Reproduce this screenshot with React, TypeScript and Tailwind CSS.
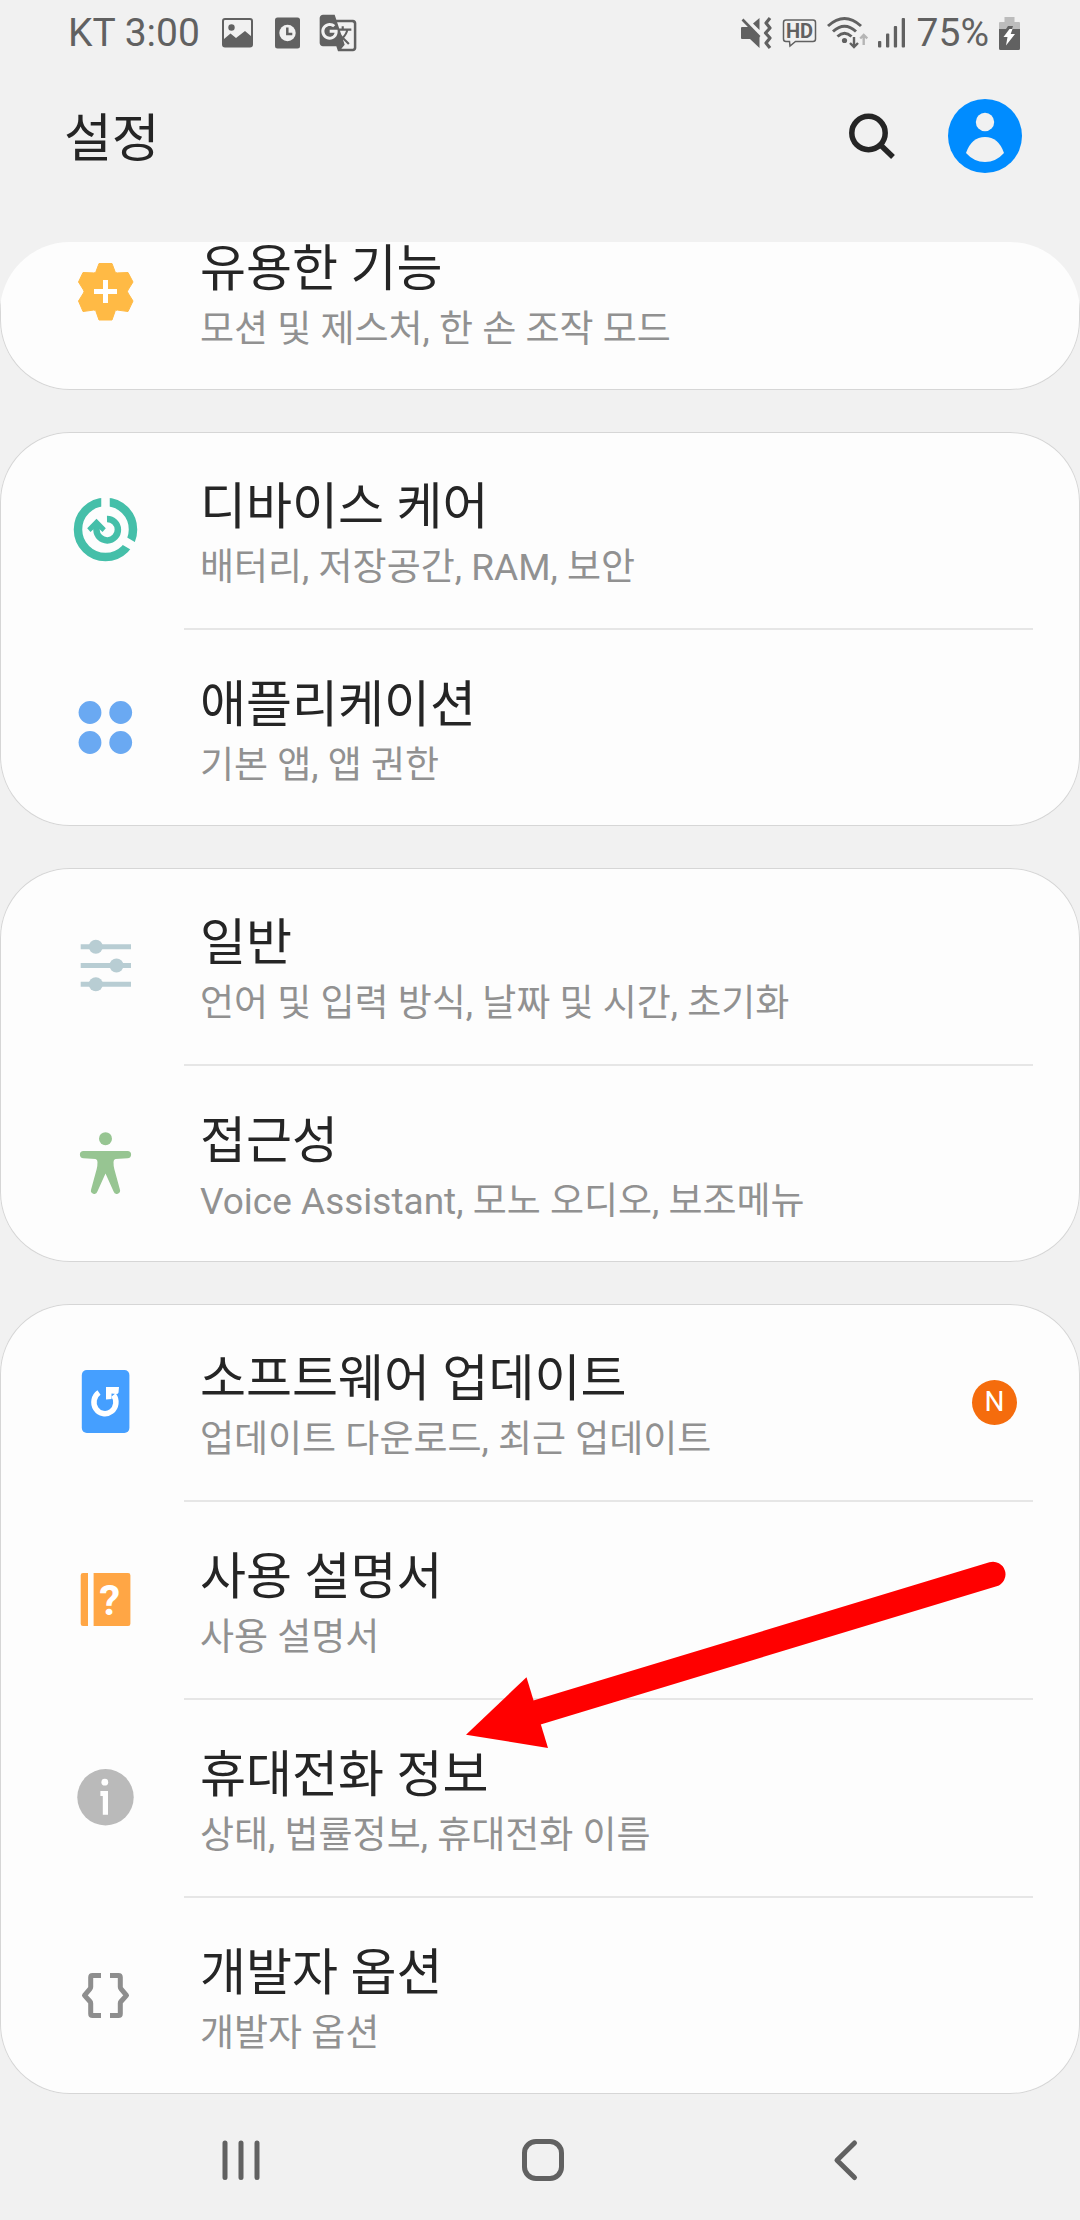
// src/App.tsx
import type { ReactNode } from "react";
import { MdGTranslate } from "react-icons/md";

type Item = {
  title: string;
  summary: string;
  icon: ReactNode;
  badge?: string;
};

/* ---------- Row icons ---------- */

function IconBox({ children }: { children: ReactNode }) {
  return (
    <svg viewBox="0 0 80 80" fill="none" aria-hidden="true" className="size-20 shrink-0">
      {children}
    </svg>
  );
}

const gearIcon = (
  <IconBox>
    <path
      d="M33 11.500h13l3 8q.8 1.800 2.600 1.400L62 20.500l5 9.500-5 8q-1 1.500 0 3l5 8-5 10.500-10.400-1.400q-1.800-.3-2.600 1.400L46 68H33l-3-8.500q-.8-1.800-2.600-1.400L17 59.500 12.500 49l5-8q1-1.500 0-3l-5-8L17 20.500l10.400.4q1.800.4 2.600-1.400z"
      fill="#ffba45"
      stroke="#ffba45"
      strokeLinejoin="round"
    />
    <path d="M28 39.500h23M39.500 28v23" stroke="#fff" strokeWidth="5" />
  </IconBox>
);

const careIcon = (
  <IconBox>
    <circle cx="39.500" cy="39.500" r="27.500" stroke="#45bfa9" strokeWidth="8.500" />
    <path d="M39.500 20V4M56 49.500l17 10" stroke="#fdfdfd" strokeWidth="8.500" />
    <path d="M41 29a10.700 10.700 0 1 1-10.500 11V36" stroke="#45bfa9" strokeWidth="6.500" />
    <path d="M30.500 28.800l9.300 9.500-3.300 3.700-6-5.500-6 5.500-3.300-3.700z" fill="#45bfa9" />
  </IconBox>
);

const appsIcon = (
  <IconBox>
    <g fill="#6aa9f2">
      <circle cx="24" cy="24.500" r="11.400" />
      <circle cx="54.700" cy="24.500" r="11.400" />
      <circle cx="24" cy="54.500" r="11.400" />
      <circle cx="54.700" cy="54.500" r="11.400" />
    </g>
  </IconBox>
);

const generalIcon = (
  <IconBox>
    <path d="M14.700 20.700H65M14.700 39.500H65M14.700 58.300H65" stroke="#b8cdd3" strokeWidth="5" />
    <g fill="#b8cdd3">
      <circle cx="29.800" cy="20.700" r="7" />
      <circle cx="50.500" cy="39.500" r="7" />
      <circle cx="29.800" cy="58.300" r="7" />
    </g>
  </IconBox>
);

const accessibilityIcon = (
  <IconBox>
    <g fill="#97c592">
      <circle cx="39.500" cy="14.700" r="6.500" />
      <path d="M17.500 27h44a3.600 3.600 0 0 1 0 7.200l-12 .8q-2 .3-2 3 0 4 .8 7l5.600 20.500a3.300 3.300 0 0 1-6.300 2L39.500 49.500l-8.100 18a3.300 3.300 0 0 1-6.300-2L30.700 45q.8-3 .8-7 0-2.700-2-3l-12-.8a3.600 3.600 0 0 1 0-7.200z" />
    </g>
  </IconBox>
);

const updateIcon = (
  <IconBox>
    <rect x="15.800" y="8" width="47.600" height="63" rx="5" fill="#459fff" />
    <path d="M33 30.500a11 11.500 0 1 0 14.500 2.500" stroke="#fff" strokeWidth="5.500" />
    <path d="M40 25h13l-.5 5.500q-.2 1.500-2.500 1.500l-4.500-.5V37l-5.500.500z" fill="#fff" />
  </IconBox>
);

const manualIcon = (
  <IconBox>
    <path d="M17 13h5v53h-5a2.300 2.300 0 0 1-2.300-2.300V15.300A2.300 2.300 0 0 1 17 13zM27.600 13h34.500a2.300 2.300 0 0 1 2.300 2.300v48.400a2.300 2.300 0 0 1-2.300 2.300H27.600z" fill="#ffa645" />
    <text x="43.700" y="55" textAnchor="middle" fill="#fff" className="font-['Roboto',sans-serif] text-[42px] font-bold">
      ?
    </text>
  </IconBox>
);

const infoIcon = (
  <IconBox>
    <circle cx="39.500" cy="39.300" r="28.200" fill="#bababa" />
    <circle cx="38.800" cy="24.200" r="3.400" fill="#fff" />
    <path d="M34.400 33H42v23.800h-5.200V38h-2.400z" fill="#fff" />
  </IconBox>
);

const developerIcon = (
  <IconBox>
    <path
      d="M35 19.500h-8.500q-1.800 0-1.800 1.800V31q0 1-.7 1.800l-5.500 6.500 5.500 6.200q.7.800.7 1.800v10.400q0 1.800 1.800 1.800H35M44 19.500h8.500q1.800 0 1.800 1.800V31q0 1 .7 1.800l5.500 6.500-5.500 6.200q-.7.800-.7 1.800v10.400q0 1.800-1.800 1.800H44"
      stroke="#8e8e8e"
      strokeWidth="5"
      strokeLinejoin="round"
    />
  </IconBox>
);

/* ---------- Data ---------- */

const advanced: Item[] = [
  { title: "유용한 기능", summary: "모션 및 제스처, 한 손 조작 모드", icon: gearIcon },
];

const device: Item[] = [
  { title: "디바이스 케어", summary: "배터리, 저장공간, RAM, 보안", icon: careIcon },
  { title: "애플리케이션", summary: "기본 앱, 앱 권한", icon: appsIcon },
];

const general: Item[] = [
  { title: "일반", summary: "언어 및 입력 방식, 날짜 및 시간, 초기화", icon: generalIcon },
  { title: "접근성", summary: "Voice Assistant, 모노 오디오, 보조메뉴", icon: accessibilityIcon },
];

const about: Item[] = [
  { title: "소프트웨어 업데이트", summary: "업데이트 다운로드, 최근 업데이트", icon: updateIcon, badge: "N" },
  { title: "사용 설명서", summary: "사용 설명서", icon: manualIcon },
  { title: "휴대전화 정보", summary: "상태, 법률정보, 휴대전화 이름", icon: infoIcon },
  { title: "개발자 옵션", summary: "개발자 옵션", icon: developerIcon },
];

/* ---------- Parts ---------- */

function StatusBar() {
  return (
    <div className="flex h-[66px] items-center justify-between pl-[68px] pr-[60px] text-[39px] leading-none text-[#616161]">
      <div className="flex items-center gap-[22px]">
        <span>KT 3:00</span>
        <svg width="31" height="30" viewBox="0 0 31 30" aria-hidden="true">
          <rect x="1" y="1" width="29" height="27.500" rx="2" fill="none" stroke="currentColor" strokeWidth="2" />
          <circle cx="9.500" cy="9.500" r="3.200" fill="currentColor" />
          <path d="M2 21l6.500-5.500 5.500 4.500 9-7 6.500 5.500V28H2z" fill="currentColor" />
        </svg>
        <svg width="25" height="32" viewBox="0 0 25 32" aria-hidden="true">
          <rect width="25" height="31" y=".5" rx="2.500" fill="currentColor" />
          <circle cx="12.500" cy="16" r="8.200" fill="#f1f1f1" />
          <path d="M12.300 10.500v6.500h5" fill="none" stroke="currentColor" strokeWidth="2.500" />
        </svg>
        <MdGTranslate className="-mx-1 size-10" />
      </div>
      <div className="flex items-center gap-[10px]">
        <svg width="32" height="32" viewBox="0 0 32 32" aria-hidden="true">
          <path d="M2 10h8l9.500 9.500V31L10 22H2q-1 0-1-1V11q0-1 1-1zM19.500 1v12L13 6.500z" fill="currentColor" />
          <path d="M2.500 2.500l17 17.500" stroke="currentColor" strokeWidth="2.600" />
          <path d="M30 1l-4 5 4 5-4.500 5 4.500 5-4 5 4 5" fill="none" stroke="currentColor" strokeWidth="3.200" strokeLinejoin="round" />
        </svg>
        <svg width="35" height="30" viewBox="0 0 35 30" aria-hidden="true">
          <path
            d="M4 2h27q2.500 0 2.500 2.500V21q0 2.500-2.500 2.500H13.500L8 28l-.5-4.500H4Q1.500 23.500 1.500 21V4.500Q1.500 2 4 2z"
            fill="none"
            stroke="currentColor"
            strokeWidth="1.500"
          />
          <text x="17.500" y="20" textAnchor="middle" fill="currentColor" className="font-['Roboto',sans-serif] text-[20px] font-bold">
            HD
          </text>
        </svg>
        <svg width="41" height="34" viewBox="0 0 41 34" aria-hidden="true">
          <g fill="none" stroke="currentColor" strokeWidth="3">
            <path d="M1 10Q17.500-5 34 10M6 15.500q11.500-10.500 23 0M10.500 20.500q7-6.500 14 0" />
            <path d="M27 21v10M23 27l4 4 4-4" strokeWidth="2.400" />
            <path d="M36.700 29V19M33.200 22.500l3.500-3.500 3.500 3.500" stroke="#b5b5b5" strokeWidth="2.400" />
          </g>
          <circle cx="17.500" cy="24.500" r="2.600" fill="currentColor" />
        </svg>
        <svg width="27" height="30" viewBox="0 0 27 30" aria-hidden="true">
          <g fill="currentColor">
            <rect x="0" y="23" width="3.300" height="6.500" rx="1" />
            <rect x="8" y="15.500" width="3.300" height="14" rx="1" />
            <rect x="15.800" y="8" width="3.300" height="21.500" rx="1" />
            <rect x="23.700" y="0" width="3.300" height="29.500" rx="1" />
          </g>
        </svg>
        <span className="pl-0.5">75%</span>
        <svg width="21" height="33" viewBox="0 0 21 33" aria-hidden="true">
          <path d="M5.500 0h10v5H20q1 0 1 1v7H0V6q0-1 1-1h4.500z" fill="#bcbcbc" />
          <path d="M0 12h7l2-3h5l-1 3h8v19.500q0 1.500-1.500 1.500h-18Q0 33 0 31.500z" fill="currentColor" />
          <path d="M10.500 12l-6 8h4L7 28.500 16 17h-4.300l1.800-5z" fill="#fff" />
        </svg>
      </div>
    </div>
  );
}

function Header() {
  return (
    <header className="flex h-[140px] items-center pl-[64px] pr-[58px]">
      <h1 className="flex-1 pt-2 text-[52px] leading-[68px]">설정</h1>
      <button type="button" aria-label="검색" className="mr-12">
        <svg viewBox="0 0 56 56" fill="none" stroke="#252525" className="size-14">
          <circle cx="24.500" cy="25" r="16.700" strokeWidth="5.500" />
          <path d="M36 36.500l13 12.500" strokeWidth="5.500" />
        </svg>
      </button>
      <button type="button" aria-label="계정">
        <svg viewBox="0 0 74 74" className="size-[74px]">
          <circle cx="37" cy="37" r="37" fill="#008cff" />
          <circle cx="37" cy="23" r="9.200" fill="#f1f1f1" />
          <path d="M18 54Q23.500 38 37 38t19 16Q48 63 37 63t-19-9z" fill="#f1f1f1" />
        </svg>
      </button>
    </header>
  );
}

function Row({ item }: { item: Item }) {
  return (
    <button type="button" className="flex h-[196px] w-full items-center gap-[54px] pl-[66px] pr-[63px] text-left">
      {item.icon}
      <span className="flex-1 pt-2">
        <span className="block text-[50px] leading-[68px] text-[#252525]">{item.title}</span>
        <span className="block text-[37px] leading-[54px] text-[#919191]">{item.summary}</span>
      </span>
      {item.badge && (
        <span className="flex size-[45px] items-center justify-center rounded-full bg-[#f56c0d] text-[28px] leading-none text-white">
          {item.badge}
        </span>
      )}
    </button>
  );
}

function Card({ items, children }: { items: Item[]; children?: ReactNode }) {
  return (
    <section className="relative rounded-[70px] bg-[#fdfdfd] ring-1 ring-inset ring-[#d6d6d6]">
      <ul>
        {items.map((item, i) => (
          <li key={item.title}>
            {i > 0 && <div className="ml-[184px] mr-[47px] h-0.5 bg-[#e6e6e6]" />}
            <Row item={item} />
          </li>
        ))}
      </ul>
      {children}
    </section>
  );
}

function NavBar() {
  return (
    <nav className="grid h-[126px] grid-cols-3 place-items-center pl-[90px] pr-[84px] pt-1.5">
      <button type="button" aria-label="최근 앱">
        <svg viewBox="0 0 48 48" fill="none" stroke="#616161" strokeWidth="5" strokeLinecap="round" className="size-12">
          <path d="M8 7v34.500M24 7v34.500M40 7v34.500" />
        </svg>
      </button>
      <button type="button" aria-label="홈">
        <svg viewBox="0 0 48 48" fill="none" stroke="#616161" strokeWidth="5" className="size-12">
          <rect x="5.500" y="5.500" width="37" height="37" rx="11.500" />
        </svg>
      </button>
      <button type="button" aria-label="뒤로">
        <svg viewBox="0 0 48 48" fill="none" stroke="#616161" strokeWidth="5" strokeLinecap="round" strokeLinejoin="round" className="size-12">
          <path d="M33.500 7L16 24.300l17.500 17.200" />
        </svg>
      </button>
    </nav>
  );
}

export default function App() {
  return (
    <div className="flex min-h-screen flex-col bg-[#f1f1f1] font-['Roboto','Noto_Sans_CJK_KR',sans-serif] text-[#252525]">
      <StatusBar />
      <Header />

      {/* Scrolled list, first card runs under the header */}
      <main className="mt-9 flex-1 overflow-hidden rounded-t-[70px]">
        <div className="-mt-12 flex flex-col gap-[42px]">
          {/* the rest of this card is above the fold */}
          <div className="rounded-b-[70px] bg-[#fdfdfd] ring-1 ring-inset ring-[#d6d6d6]">
            <Row item={advanced[0]} />
          </div>
          <Card items={device} />
          <Card items={general} />
          <Card items={about}>
            {/* Pointer to the phone info row */}
            <svg
              viewBox="0 0 550 200"
              aria-hidden="true"
              className="pointer-events-none absolute left-[460px] top-64 h-[200px] w-[550px]"
            >
              <path d="M77 152.500L533 14.300" stroke="#ff0000" strokeWidth="25" strokeLinecap="round" />
              <path d="M6 174.700L66.500 117.300 88 188z" fill="#ff0000" />
            </svg>
          </Card>
        </div>
      </main>

      <NavBar />
    </div>
  );
}
